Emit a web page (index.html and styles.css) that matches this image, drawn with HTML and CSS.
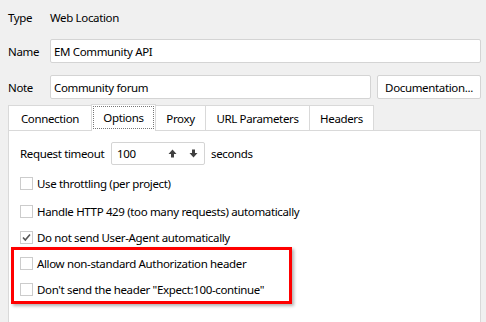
FILE: index.html
```html
<!DOCTYPE html>
<html>
<head>
<meta charset="utf-8">
<link rel="stylesheet" href="styles.css">
</head>
<body>
<div class="page">
  <div class="field type-row">
    <span class="label">Type</span>
    <span class="value">Web Location</span>
  </div>
  <div class="field name-row">
    <span class="label">Name</span>
    <div class="input grow">EM Community API</div>
  </div>
  <div class="field note-row">
    <span class="label">Note</span>
    <div class="input grow">Community forum</div>
    <div class="button">Documentation...</div>
  </div>
  <div class="tabs">
    <div class="tab tab-connection">Connection</div>
    <div class="tab tab-options selected"><span class="focus">Options</span></div>
    <div class="tab tab-proxy">Proxy</div>
    <div class="tab tab-url">URL Parameters</div>
    <div class="tab tab-headers">Headers</div>
  </div>
  <div class="panel">
    <div class="timeout-row">
      <span class="t-label">Request timeout</span>
      <div class="spin">
        <span class="spin-value">100</span>
        <svg class="arrow up" width="9" height="9" viewBox="0 0 9 9"><path d="M4.5 0.5 L8.5 5 L6 5 L6 8.5 L3 8.5 L3 5 L0.5 5 Z" fill="#404040"/></svg>
        <svg class="arrow down" width="9" height="9" viewBox="0 0 9 9"><path d="M4.5 8.5 L8.5 4 L6 4 L6 0.5 L3 0.5 L3 4 L0.5 4 Z" fill="#404040"/></svg>
      </div>
      <span class="t-unit">seconds</span>
    </div>
    <div class="check r1"><span class="box"></span><span>Use throttling (per project)</span></div>
    <div class="check r2"><span class="box"></span><span>Handle HTTP 429 (too many requests) automatically</span></div>
    <div class="check r3"><span class="box"><svg width="11" height="11" viewBox="0 0 11 11"><path d="M2 5.5 L4.3 8 L9 2.5" fill="none" stroke="#555" stroke-width="1.6"/></svg></span><span>Do not send User-Agent automatically</span></div>
    <div class="highlight">
      <div class="check r4"><span class="box"></span><span>Allow non-standard Authorization header</span></div>
      <div class="check r5"><span class="box"></span><span>Don't send the header "Expect:100-continue"</span></div>
    </div>
  </div>
</div>
</body>
</html>
```
FILE: styles.css
```css
html, body {
  margin: 0;
  padding: 0;
  background: #f0f0f0;
  width: 486px;
  height: 322px;
  overflow: hidden;
}
.page {
  font-family: "Noto Sans", "Open Sans", sans-serif;
  font-size: 11.5px;
  letter-spacing: -0.35px;
  color: #000;
  padding: 0 5px 0 8px;
}
.field {
  display: flex;
  align-items: center;
}
.label {
  width: 42px;
  flex: none;
}
.type-row {
  height: 22px;
  margin-top: 6px;
}
.name-row {
  margin-top: 11px;
  height: 24px;
}
.note-row {
  margin-top: 12px;
  height: 24px;
}
.input {
  height: 24px;
  box-sizing: border-box;
  border: 1px solid #d4d4d4;
  border-radius: 2px;
  background: #fff;
  padding-left: 3px;
  display: flex;
  align-items: center;
}
.grow {
  flex: 1;
}
.button {
  margin-left: 6px;
  width: 104px;
  height: 24px;
  box-sizing: border-box;
  border: 1px solid #d4d4d4;
  border-radius: 2px;
  background: #fff;
  display: flex;
  align-items: center;
  justify-content: center;
}
.tabs {
  margin-top: 6px;
  height: 25px;
  display: flex;
  position: relative;
  z-index: 1;
}
.tab {
  box-sizing: border-box;
  height: 25px;
  background: #fff;
  border: 1px solid #d9d9d9;
  border-bottom: none;
  display: flex;
  align-items: center;
  justify-content: center;
}
.tab-connection { width: 84px; }
.tab-options { width: 65px; margin-left: -1px; }
.tab-proxy { width: 51px; margin-left: -1px; }
.tab-url { width: 105px; margin-left: -1px; }
.tab-headers { width: 65px; margin-left: -1px; }
.tab.selected {
  height: 27px;
  margin-top: -1px;
  padding: 1px 1px 2px;
  border-color: #d9d9d9;
}
.focus {
  flex: 1;
  align-self: stretch;
  border: 1px dotted #777;
  display: flex;
  align-items: center;
  justify-content: center;
}
.panel {
  background: #fff;
  border: 1px solid #d9d9d9;
  border-bottom: none;
  height: 180px;
  padding: 11px 0 0 11px;
}
.timeout-row {
  display: flex;
  align-items: center;
  height: 23px;
}
.t-label {
  width: 86px;
  flex: none;
  white-space: nowrap;
}
.spin {
  margin-left: 5px;
  width: 94px;
  height: 23px;
  box-sizing: border-box;
  border: 1px solid #d4d4d4;
  border-radius: 2px;
  display: flex;
  align-items: center;
  padding-left: 5px;
}
.spin-value {
  flex: 1;
}
.arrow.up { margin-right: 12px; }
.arrow.down { margin-right: 6px; }
.t-unit {
  margin-left: 6px;
}
.check {
  display: flex;
  align-items: center;
  height: 13px;
  gap: 4px;
  white-space: nowrap;
}
.box {
  width: 13px;
  height: 13px;
  box-sizing: border-box;
  border: 1px solid #cccccc;
  background: #fff;
  flex: none;
  display: flex;
  align-items: center;
  justify-content: center;
}
.r1 { margin-top: 12px; }
.r2 { margin-top: 15px; }
.r3 { margin-top: 13px; }
.r5 { margin-top: 13px; }
.highlight {
  margin-top: 3px;
  margin-left: -9px;
  width: 281px;
  box-sizing: border-box;
  border: 3px solid #f00;
  padding: 7px 0 5px 6px;
  box-shadow: 2px 2px 3px rgba(0, 0, 0, 0.3);
}
```
